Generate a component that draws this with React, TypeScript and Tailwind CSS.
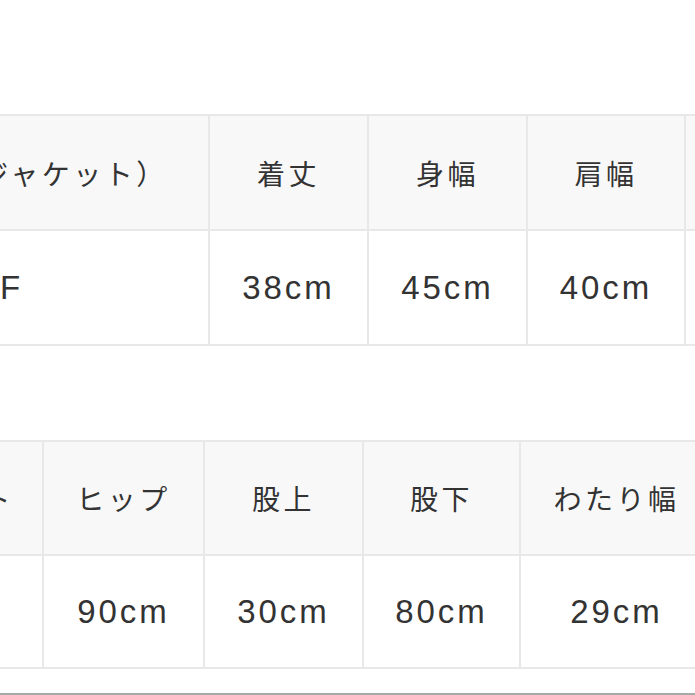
import React from "react";

const font = {
  fontFamily: '"Noto Sans CJK JP", "Noto Sans", sans-serif',
};

const numFont = {
  fontFamily: '"Liberation Sans", "Noto Sans CJK JP", sans-serif',
};

type Col = { w: string; head: string; val: string };

const t1: Col[] = [
  { w: "w-[395px]", head: "サイズ（ジャケット）", val: "F" },
  { w: "w-[159px]", head: "着丈", val: "38cm" },
  { w: "w-[159px]", head: "身幅", val: "45cm" },
  { w: "w-[158px]", head: "肩幅", val: "40cm" },
  { w: "w-[159px]", head: "袖丈", val: "58cm" },
];

const t2: Col[] = [
  { w: "w-[184px]", head: "ウエスト", val: "66cm" },
  { w: "w-[161px]", head: "ヒップ", val: "90cm" },
  { w: "w-[159px]", head: "股上", val: "30cm" },
  { w: "w-[157px]", head: "股下", val: "80cm" },
  { w: "w-[193px]", head: "わたり幅", val: "29cm" },
];

function Table({
  cols,
  headH,
  bodyH,
  offset,
}: {
  cols: Col[];
  headH: string;
  bodyH: string;
  offset: string;
}) {
  return (
    <div className={`flex flex-col border-t-2 border-[#e8e8e8] shrink-0 ${offset}`}>
      <div className="flex">
        {cols.map((c, i) => (
          <div
            key={i}
            className={`${c.w} ${headH} shrink-0 box-border border-r-2 border-b-2 border-[#e8e8e8] bg-[#f8f8f8] flex items-center justify-center whitespace-nowrap text-[28px] tracking-[3.5px] text-[#333]`}
          >
            {c.head}
          </div>
        ))}
      </div>
      <div className="flex">
        {cols.map((c, i) => (
          <div
            key={i}
            className={`${c.w} ${bodyH} shrink-0 box-border border-r-2 border-b-2 border-[#e8e8e8] bg-white flex items-center justify-center whitespace-nowrap text-[33px] tracking-[3px] text-[#333]`}
            style={numFont}
          >
            {c.val}
          </div>
        ))}
      </div>
    </div>
  );
}

export default function App() {
  return (
    <div
      className="w-[695px] h-[695px] overflow-hidden bg-white flex flex-col"
      style={font}
    >
      <div className="h-[114px] shrink-0" />
      <Table cols={t1} headH="h-[115px]" bodyH="h-[115px]" offset="ml-[-185px]" />
      <div className="h-[94px] shrink-0" />
      <Table cols={t2} headH="h-[114px]" bodyH="h-[113px]" offset="ml-[-140px]" />
      <div className="h-[24px] shrink-0" />
      <div className="h-[2px] shrink-0 bg-[#a8a8a8]" />
    </div>
  );
}
